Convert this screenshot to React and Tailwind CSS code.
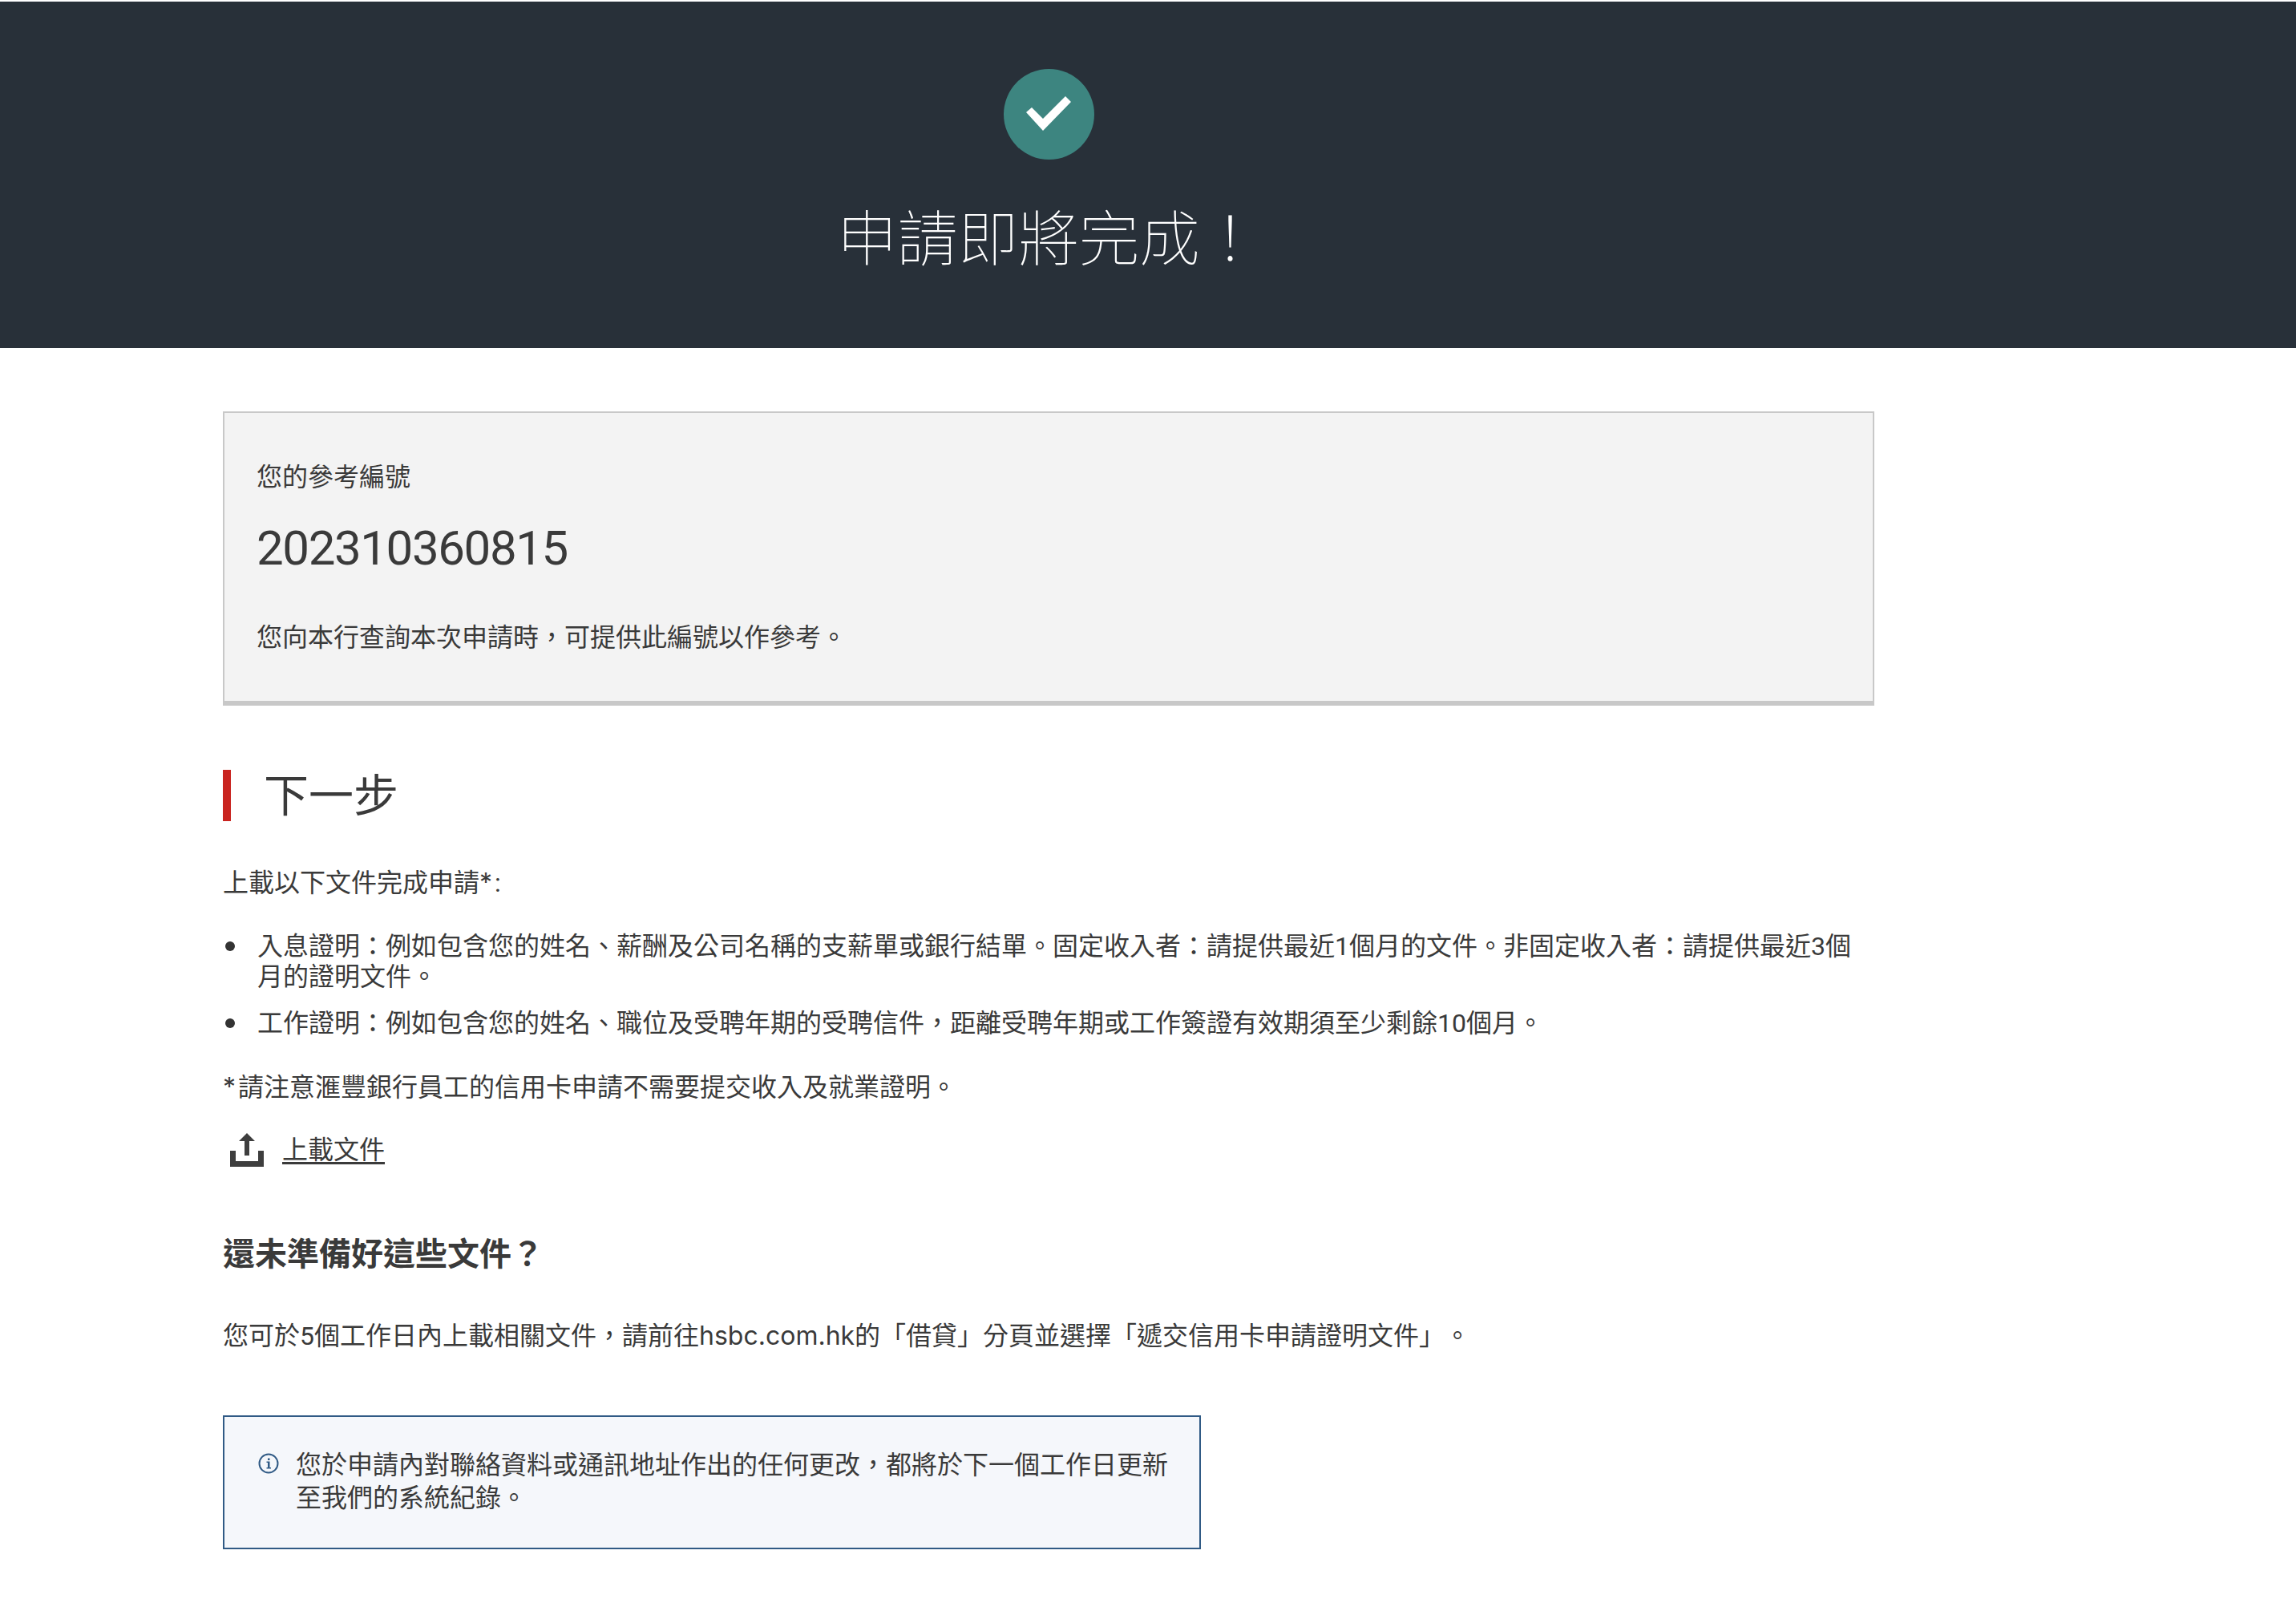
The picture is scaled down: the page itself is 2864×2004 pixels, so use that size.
const font = "font-['Roboto','Noto_Sans_CJK_TC',sans-serif]";
const latin = "font-['Inter','Noto_Sans_CJK_TC',sans-serif]";

const UploadIcon = () => (
    <svg width="42" height="42" viewBox="0 0 42 42" className="shrink-0" fill="#3e3e3e">
        <path d="M21 0 L31 10 L24 10 L24 28 L18 28 L18 10 L11 10 Z" />
        <path d="M0 22 L7 22 L7 35 L35 35 L35 22 L42 22 L42 42 L0 42 Z" />
    </svg>
);

const InfoIcon = () => (
    <svg width="26" height="26" viewBox="0 0 26 26" className="shrink-0" fill="none">
        <circle cx="13" cy="13" r="11.5" stroke="#305a85" strokeWidth="2" />
        <path d="M10.5 10.5 H14.5 V18 H16 V19.5 H10.5 V18 H12 V12 H10.5 Z" fill="#305a85" />
        <rect x="12" y="6.5" width="2.5" height="2.5" fill="#305a85" />
    </svg>
);

const Bullet = ({ children }) => (
    <li className="flex">
        <span className="w-[12px] h-[12px] mt-[13px] ml-[3px] mr-[28px] rounded-full bg-[#333333] shrink-0"></span>
        <span>{children}</span>
    </li>
);

export default function App() {
    return (
        <div className={`${font} min-h-[2004px] bg-white pt-[2px] text-[32px] leading-[38px] font-normal text-[#3a3a3a] [text-spacing-trim:space-all]`}>
            <header className="h-[432px] bg-[#283039] pt-[84px] pr-[248px] flex flex-col items-center">
                <div className="w-[113px] h-[113px] rounded-full bg-[#3d8580]">
                    <svg width="113" height="113" viewBox="0 0 113 113" fill="#ffffff">
                        <path d="M28 54 L49 77 L84 41 L77 34 L49 62 L35 48 Z" />
                    </svg>
                </div>
                <h1 className="mt-[50px] text-[75.5px] leading-[100px] font-thin text-white">申請即將完成！</h1>
            </header>

            <main className="w-[2060px] ml-[278px]">
                <section className="mt-[79px] h-[367px] bg-[#f3f3f3] border-2 border-b-[6px] border-[#c8c8c8] pl-[40px] pt-[60px]">
                    <p className="leading-[40px]">您的參考編號</p>
                    <p className="mt-[36px] text-[60px] leading-[66px] tracking-[-1.4px]">202310360815</p>
                    <p className="mt-[58px] leading-[40px]">您向本行查詢本次申請時，可提供此編號以作參考。</p>
                </section>

                <h2 className="mt-[80px] h-[64px] border-l-[10px] border-[#c9241f] pl-[41px] pt-[1px] text-[56px] leading-[64px] font-normal">下一步</h2>

                <p className="mt-[58px]">上載以下文件完成申請<span className={`${latin} pr-[3px]`}>*</span>:</p>

                <ul className="mt-[41px] flex flex-col gap-[20px]">
                    <Bullet>入息證明：例如包含您的姓名、薪酬及公司名稱的支薪單或銀行結單。固定收入者：請提供最近1個月的文件。非固定收入者：請提供最近3個月的證明文件。</Bullet>
                    <Bullet>工作證明：例如包含您的姓名、職位及受聘年期的受聘信件，距離受聘年期或工作簽證有效期須至少剩餘10個月。</Bullet>
                </ul>

                <p className="mt-[42px]"><span className={`${latin} pr-[3px]`}>*</span>請注意滙豐銀行員工的信用卡申請不需要提交收入及就業證明。</p>

                <a className="mt-[37px] ml-[9px] flex items-center gap-[23px] h-[44px] underline decoration-[3px] underline-offset-[4px]">
                    <UploadIcon />
                    <span>上載文件</span>
                </a>

                <h3 className="mt-[84px] text-[40px] leading-[50px] font-bold">還未準備好這些文件？</h3>

                <p className="mt-[57px]">您可於5個工作日內上載相關文件，請前往<span className={latin}>hsbc.com.hk</span>的「借貸」分頁並選擇「遞交信用卡申請證明文件」。</p>

                <aside className="mt-[80px] w-[1220px] h-[167px] bg-[#f5f7fb] border-2 border-[#305a85] pl-[42px] pt-[40px] flex gap-[21px]">
                    <div className="mt-[5px]"><InfoIcon /></div>
                    <p className="w-[1100px] leading-[41px]">您於申請內對聯絡資料或通訊地址作出的任何更改，都將於下一個工作日更新至我們的系統紀錄。</p>
                </aside>
            </main>
        </div>
    );
}
